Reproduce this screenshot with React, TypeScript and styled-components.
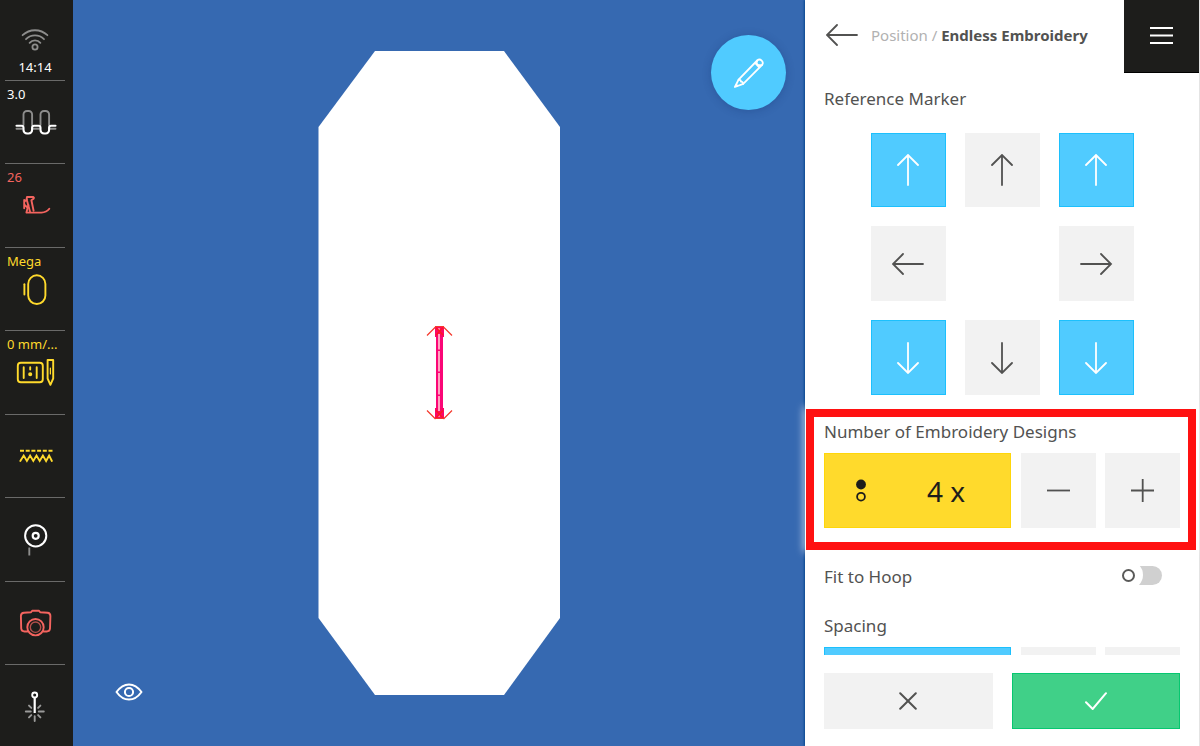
import React, { ReactNode } from "react";
import styled, { createGlobalStyle, css } from "styled-components";

const color = {
  ink: "#1d1d1b",
  canvas: "#3669b1",
  text: "#525251",
  muted: "#b1b1b1",
  tile: "#f2f2f2",
  blue: "#50cbff",
  blueEdge: "#1cc0fd",
  green: "#40d088",
  greenEdge: "#06c770",
  yellow: "#ffda2c",
  yellowEdge: "#ffd60a",
  red: "#ff1111",
  alert: "#f4645f",
};

const GlobalStyle = createGlobalStyle`
  *, *::before, *::after { box-sizing: border-box; }
  body {
    margin: 0;
    font-family: "Noto Sans", "Open Sans", sans-serif;
    color: ${color.text};
    background: #fff;
  }
  button { font: inherit; color: inherit; padding: 0; border: 0; background: none; cursor: pointer; }
  svg { display: block; flex: none; fill: none; stroke: currentColor; }
`;

const Screen = styled.div`
  display: flex;
  height: 100vh;
  overflow: hidden;
`;

/* ---------- machine status bar ---------- */

const StatusBar = styled.nav`
  display: flex;
  flex-direction: column;
  flex: 0 0 73px;
  padding: 0 8px 0 5px;
  background: ${color.ink};
  color: #fff;
  font-size: 13px;
  line-height: 18px;
`;

const Connection = styled.div`
  display: flex;
  flex-direction: column;
  align-items: center;
  justify-content: flex-end;
  flex: 0 0 81px;
  gap: 7px;
  padding-bottom: 4px;
  border-bottom: 1px solid #6a6a69;
`;

const StatusButton = styled.button<{ $tone?: string; $labelled?: boolean }>`
  display: flex;
  flex-direction: column;
  justify-content: ${(p) => (p.$labelled ? "flex-start" : "center")};
  flex: 1 1 0;
  min-height: 0;
  border-bottom: 1px solid #6a6a69;
  color: ${(p) => p.$tone ?? "#fff"};
  text-align: left;

  &:last-child {
    flex: 0 0 81px;
    border-bottom: 0;
  }
`;

const StatusLabel = styled.span`
  padding: 4px 0 0 2px;
  white-space: nowrap;
`;

/* ---------- embroidery canvas ---------- */

const Canvas = styled.main`
  position: relative;
  display: flex;
  align-items: center;
  justify-content: center;
  flex: 1 1 0;
  min-width: 0;
  background: ${color.canvas};
`;

const EditButton = styled.button`
  position: absolute;
  top: 35px;
  right: 19px;
  display: grid;
  place-items: center;
  width: 75px;
  height: 75px;
  border-radius: 50%;
  background: ${color.blue};
  color: #fff;
  box-shadow: 0 1px 8px rgba(20, 50, 110, 0.3);
`;

const ViewButton = styled.button`
  position: absolute;
  left: 42px;
  bottom: 45px;
  color: #fff;
`;

/* ---------- settings panel ---------- */

const Panel = styled.aside`
  position: relative;
  display: flex;
  flex-direction: column;
  flex: 0 0 395px;
  background: #fff;
  border-right: 1px solid #e4e4e4;
  box-shadow: -1px 0 2px #08478f;
`;

const PanelHeader = styled.header`
  display: flex;
  align-items: center;
  flex: 0 0 73px;
  padding-left: 21px;
`;

const BackButton = styled.button`
  margin: 0 12px 3px 0;
`;

const Breadcrumb = styled.h1`
  flex: 1;
  margin: 0;
  padding-bottom: 3px;
  font-size: 15px;
  line-height: 20px;
  font-weight: 700;
  white-space: nowrap;
`;

const BreadcrumbParent = styled.span`
  font-weight: 400;
  color: ${color.muted};
`;

const MenuButton = styled.button`
  display: grid;
  place-items: center;
  align-self: stretch;
  width: 75px;
  background: ${color.ink};
  border-bottom: 1px solid #000;
  color: #fff;
`;

const PanelBody = styled.div`
  flex: 1 1 0;
  min-height: 0;
  overflow-x: visible;
  overflow-y: clip;
  padding: 14px 19px 0;
`;

const Heading = styled.h2`
  margin: 0;
  font-size: 17px;
  line-height: 24px;
  font-weight: 400;
  white-space: nowrap;
`;

const MarkerGrid = styled.div`
  display: grid;
  grid-template-columns: repeat(3, 75px);
  grid-template-rows: 74px 75px 75px;
  gap: 19px;
  padding: 22px 46px 14px 47px;
`;

type Tone = "plain" | "blue" | "green";

const tones = {
  plain: css`
    background: ${color.tile};
    color: ${color.text};
  `,
  blue: css`
    background: ${color.blue};
    border: 1px solid ${color.blueEdge};
    color: #fff;
  `,
  green: css`
    background: ${color.green};
    border: 1px solid ${color.greenEdge};
    color: #fff;
  `,
};

const Tile = styled.button<{ $tone?: Tone }>`
  display: grid;
  place-items: center;
  ${(p) => tones[p.$tone ?? "plain"]}
`;

const Highlight = styled.section`
  margin: 0 -16px 0 -18px;
  padding: 3px 8px 14px 10px;
  border: 8px solid ${color.red};
  background: #fff;
  box-shadow: 0 0 8px 2px rgba(255, 255, 255, 0.75);
`;

const StepperRow = styled.div`
  display: flex;
  gap: 10px;
  height: 75px;
  margin-top: 9px;
`;

const StepButtons = styled.div`
  display: grid;
  grid-template-columns: 75px 75px;
  gap: 9px;
`;

const ValueButton = styled.button`
  display: grid;
  grid-template-columns: 75px 1fr;
  align-items: center;
  justify-items: center;
  flex: 1;
  padding-right: 18px;
  background: ${color.yellow};
  box-shadow: inset 0 0 0 1px ${color.yellowEdge};
  color: ${color.ink};
  font-size: 28px;
  line-height: 40px;
`;

const SpacingValue = styled(Tile)`
  flex: 1;
`;

const SwitchRow = styled.label`
  display: flex;
  align-items: center;
  justify-content: space-between;
  margin: 15px 18px 25px 0;
  font-size: 17px;
  line-height: 24px;
`;

const Switch = styled.input`
  appearance: none;
  position: relative;
  width: 46px;
  height: 19px;
  margin: 0 0 4px;
  border-radius: 10px;
  background: #d0d0d0;
  cursor: pointer;

  &::before {
    content: "";
    position: absolute;
    left: -1px;
    top: -5px;
    width: 28px;
    height: 28px;
    border-radius: 50%;
    background: #fff;
  }

  &::after {
    content: "";
    position: absolute;
    left: 6px;
    top: 3px;
    width: 13px;
    height: 13px;
    border: 2px solid #5a5a59;
    border-radius: 50%;
  }

  &:checked::before,
  &:checked::after {
    transform: translateX(21px);
  }
`;

const PanelFooter = styled.footer`
  display: grid;
  grid-template-columns: 1fr 1fr;
  grid-template-rows: 56px;
  gap: 19px;
  padding: 18px 19px 17px;
`;

/* ---------- icons ---------- */

type Direction = "up" | "right" | "down" | "left";
const turn: Record<Direction, number> = { up: 0, right: 90, down: 180, left: 270 };

const Arrow = ({ to }: { to: Direction }) => (
  <svg width="33" height="32" viewBox="0 0 33 32" strokeWidth="1.8" strokeLinecap="round" aria-hidden="true">
    <path d="M16 1V31M6 11L16 1L26 11" transform={`rotate(${turn[to]} 16 16)`} />
  </svg>
);

const StatusIcon = ({ children }: { children: ReactNode }) => (
  <svg width="60" height="40" viewBox="0 0 60 40" strokeWidth="1.9" strokeLinecap="round" strokeLinejoin="round" aria-hidden="true">
    {children}
  </svg>
);

const WifiIcon = () => (
  <svg width="28" height="24" viewBox="0 0 28 24" strokeWidth="1.8" strokeLinecap="round" aria-hidden="true">
    <g stroke="#8d8d8c">
      <path d="M1.6 8.2C8.6 1.6 19.4 1.6 26.4 8.2M5 12.2C10 7.2 18 7.2 23 12.2M8.6 15.9C11.6 12.6 16.4 12.6 19.4 15.9" />
      <circle cx="14" cy="20" r="2.6" />
    </g>
  </svg>
);

const TensionIcon = () => (
  <StatusIcon>
    <path
      stroke="#8d8d8c"
      d="M18.5 22V11.5a3.5 3.5 0 0 1 3.5 -3.5h1.6a3.5 3.5 0 0 1 3.5 3.5V22M35.5 22V11.5a3.5 3.5 0 0 1 3.5 -3.5h1.6a3.5 3.5 0 0 1 3.5 3.5V22M11.5 25.8H17M28.500 25.8H34M45.500 25.8H50.5"
    />
    <path
      stroke="#fff"
      strokeWidth="2.1"
      d="M11.5 22.8H16.5Q18.5 22.8 18.5 24.8V27a3.5 3.5 0 0 0 3.5 3.5h1.6a3.5 3.5 0 0 0 3.5 -3.5V24.8Q27.1 22.8 29.1 22.8H33.5Q35.5 22.8 35.5 24.8V27a3.5 3.5 0 0 0 3.5 3.5h1.6a3.5 3.5 0 0 0 3.5 -3.5V24.8Q44.1 22.8 46.1 22.8H50.5"
    />
  </StatusIcon>
);

const PresserFootIcon = () => (
  <StatusIcon>
    <path d="M22 11H28.4Q29.2 11.4 28.8 12.4L26.4 14.2L28.6 24.8M22 11L21.600 13.200L25 25.6M19.2 14V22.3M19.2 18.3L22 21.200M19.4 15.600L22 13.4" />
    <path d="M23.400 19L21.400 26.600H36.5Q41.5 26.5 44.3 22.8" />
  </StatusIcon>
);

const HoopIcon = () => (
  <StatusIcon>
    <rect x="23.2" y="5.3" width="17.2" height="28.7" rx="8.6" />
    <path d="M19.4 14.2V24.5" />
  </StatusIcon>
);

const PlateIcon = () => (
  <StatusIcon>
    <rect x="12.8" y="9.8" width="25" height="19.5" rx="3" />
    <path d="M18.7 14.2V25M31.7 14.2V25M25.2 14.2V16.6" />
    <circle cx="25.2" cy="21.3" r="1.1" fill="currentColor" />
    <path d="M42.6 7H48.2V25.5L45.4 31.8L42.6 25.5Z" />
    <path strokeWidth="1.2" d="M45.4 15V21" />
  </StatusIcon>
);

const StitchIcon = () => (
  <StatusIcon>
    <path strokeLinecap="butt" strokeDasharray="4 1.7" d="M15 14.7H47.7" />
    <path
      strokeLinejoin="miter"
      d="M15.3 25L18.7 19.6L21.9 25L25.1 19.6L28.3 25L31.5 19.6L34.7 25L37.9 19.6L41.1 25L44.1 19.6L46.9 25"
    />
  </StatusIcon>
);

const BobbinIcon = () => (
  <StatusIcon>
    <circle cx="30.7" cy="16.8" r="10.6" strokeWidth="2" />
    <circle cx="30.7" cy="16.8" r="3" strokeWidth="2.2" />
    <path stroke="#8d8d8c" strokeLinecap="butt" d="M24.3 28.500V36.500" />
  </StatusIcon>
);

const CameraIcon = () => (
  <StatusIcon>
    <path d="M22.5 28.5H19.5Q16.5 28.5 16.2 25.5L15.9 13Q15.9 10 18.9 9.8L26 9.3L27.2 7.7H34L35.2 9.3L42.5 9.8Q45.4 10 45.4 13L45 25.5Q44.7 28.5 41.8 28.5H38.5" />
    <circle cx="30.5" cy="24.2" r="8.2" />
    <circle cx="30.5" cy="24.2" r="5.2" strokeWidth="1.4" opacity="0.7" />
  </StatusIcon>
);

const PinIcon = () => (
  <StatusIcon>
    <path
      stroke="#9a9a99"
      d="M20.8 26.5H25.8M33.8 26.5H38.8M29.7 31.3V36M24 20.6L26.3 22.9M35.4 20.6L33.1 22.9M24 32.4L26.3 30.1M35.4 32.4L33.1 30.1"
    />
    <circle cx="29.7" cy="10" r="2.5" strokeWidth="1.9" />
    <path strokeWidth="2.2" strokeLinecap="butt" d="M29.7 12.5V28" />
  </StatusIcon>
);

const PencilIcon = () => (
  <svg width="32" height="32" viewBox="0 0 32 32" strokeWidth="1.8" strokeLinecap="round" strokeLinejoin="round" aria-hidden="true">
    <path d="M1.9 30L5.6 22.6L24.2 3.5A3.3 3.3 0 0 1 28.9 8.1L10.2 26.8Z" />
    <path d="M5.6 22.6Q8.1 22.8 7.9 24.6Q9.9 24.6 10.2 26.8M24.2 3.5Q22 8.8 28.9 8.1M3.4 28L4.4 28.8M22.3 6.2L26 10" />
  </svg>
);

const EyeIcon = () => (
  <svg width="28" height="18" viewBox="0 0 28 18" strokeWidth="2" strokeLinejoin="round" aria-hidden="true">
    <path d="M1.5 9Q7 1.4 14 1.4T26.5 9Q21 16.6 14 16.6T1.5 9Z" />
    <circle cx="14" cy="9" r="4.1" />
  </svg>
);

const MenuIcon = () => (
  <svg width="24" height="18" viewBox="0 0 24 18" strokeWidth="2" aria-hidden="true">
    <path d="M0 1H23M0 8.5H23M0 16H23" />
  </svg>
);

const CountIcon = () => (
  <svg width="13" height="25" viewBox="0 0 13 25" aria-hidden="true">
    <circle cx="6" cy="6.5" r="4.9" fill="currentColor" stroke="none" />
    <circle cx="6" cy="18.7" r="3.9" strokeWidth="1.8" />
  </svg>
);

const StepIcon = ({ plus }: { plus?: boolean }) => (
  <svg width="25" height="25" viewBox="0 0 25 25" strokeWidth="1.8" aria-hidden="true">
    <path d={plus ? "M1 12.5H24M12.7 1V24" : "M1 12.5H24"} />
  </svg>
);

const CrossIcon = () => (
  <svg width="18" height="18" viewBox="0 0 18 18" strokeWidth="2" strokeLinecap="round" aria-hidden="true">
    <path d="M1.2 1.2L16.8 16.8M16.8 1.2L1.2 16.8" />
  </svg>
);

const CheckIcon = () => (
  <svg width="22" height="18" viewBox="0 0 22 18" strokeWidth="2" strokeLinecap="round" aria-hidden="true">
    <path d="M1 10.2L7.7 17L21 1.2" />
  </svg>
);

const HoopDrawing = () => (
  <svg width="242" height="644" viewBox="0 0 242 644" role="img" aria-label="Hoop with endless design">
    <polygon points="57,0 186,0 242,76 242,567 186,644 57,644 0.5,567 0.5,76" fill="#fff" stroke="none" />
    <g stroke="none">
      <rect x="118" y="276" width="7" height="91" fill="#fb0677" />
      <rect x="120" y="286" width="2" height="70" fill="#ffa3c0" />
      <path fill="#fb0677" d="M120 298.5h2v1.5h-2zM120 320.5h2v1.5h-2zM120 343.5h2v1.5h-2z" />
      <rect x="117" y="275" width="9" height="11" fill="#fb0668" />
      <rect x="117" y="357" width="9" height="11" fill="#fb0668" />
      <path fill="#ffa3c0" d="M120 283h2v4h-2zM120 356h2v4h-2z" />
      <path fill="#ff7a9c" d="M120 277h2v2h-2zM120 364h2v2h-2z" />
    </g>
    <g stroke="#ff1a1a" strokeWidth="1.2">
      <path d="M118 276.5L125 284M125 276.5L118 284M118 359.5L125 367M125 359.5L118 367" />
      <path
        stroke="#f5382c"
        d="M117.5 276L109 284.5M125.5 276L134 284.5M109 359.5L117.5 368M134 359.5L125.5 368M117 275.5H126M117 367.5H126"
      />
    </g>
  </svg>
);

/* ---------- data ---------- */

const statusItems: { name: string; label?: string; tone?: string; icon: ReactNode }[] = [
  { name: "Thread tension", label: "3.0", icon: <TensionIcon /> },
  { name: "Presser foot", label: "26", tone: color.alert, icon: <PresserFootIcon /> },
  { name: "Hoop", label: "Mega", tone: color.yellow, icon: <HoopIcon /> },
  { name: "Stitch plate and needle", label: "0 mm/...", tone: color.yellow, icon: <PlateIcon /> },
  { name: "Feed dog", tone: color.yellow, icon: <StitchIcon /> },
  { name: "Bobbin", icon: <BobbinIcon /> },
  { name: "Camera", tone: color.alert, icon: <CameraIcon /> },
  { name: "Pinpoint laser", icon: <PinIcon /> },
];

const markers: ({ name: string; to: Direction; on?: boolean } | null)[] = [
  { name: "Top left", to: "up", on: true },
  { name: "Top", to: "up" },
  { name: "Top right", to: "up", on: true },
  { name: "Left", to: "left" },
  null,
  { name: "Right", to: "right" },
  { name: "Bottom left", to: "down", on: true },
  { name: "Bottom", to: "down" },
  { name: "Bottom right", to: "down", on: true },
];

export default function App() {
  return (
    <>
      <GlobalStyle />
      <Screen>
        <StatusBar aria-label="Machine status">
          <Connection>
            <WifiIcon />
            <span>14:14</span>
          </Connection>
          {statusItems.map((item) => (
            <StatusButton key={item.name} aria-label={item.name} $tone={item.tone} $labelled={!!item.label}>
              {item.label && <StatusLabel>{item.label}</StatusLabel>}
              {item.icon}
            </StatusButton>
          ))}
        </StatusBar>

        <Canvas>
          <HoopDrawing />
          <EditButton aria-label="Edit">
            <PencilIcon />
          </EditButton>
          <ViewButton aria-label="Show view options">
            <EyeIcon />
          </ViewButton>
        </Canvas>

        <Panel>
          <PanelHeader>
            <BackButton aria-label="Back">
              <Arrow to="left" />
            </BackButton>
            <Breadcrumb>
              <BreadcrumbParent>Position / </BreadcrumbParent>
              Endless Embroidery
            </Breadcrumb>
            <MenuButton aria-label="Menu">
              <MenuIcon />
            </MenuButton>
          </PanelHeader>

          <PanelBody>
            <Heading>Reference Marker</Heading>
            <MarkerGrid>
              {markers.map((marker, i) =>
                marker ? (
                  <Tile key={i} $tone={marker.on ? "blue" : "plain"} aria-label={marker.name} aria-pressed={!!marker.on}>
                    <Arrow to={marker.to} />
                  </Tile>
                ) : (
                  <span key={i} />
                )
              )}
            </MarkerGrid>

            <Highlight>
              <Heading>Number of Embroidery Designs</Heading>
              <StepperRow>
                <ValueButton>
                  <CountIcon />
                  <span>4 x</span>
                </ValueButton>
                <StepButtons>
                  <Tile aria-label="Fewer designs">
                    <StepIcon />
                  </Tile>
                  <Tile aria-label="More designs">
                    <StepIcon plus />
                  </Tile>
                </StepButtons>
              </StepperRow>
            </Highlight>

            <SwitchRow>
              Fit to Hoop
              <Switch type="checkbox" role="switch" />
            </SwitchRow>

            <Heading>Spacing</Heading>
            <StepperRow>
              <SpacingValue $tone="blue" aria-label="Spacing value" />
              <StepButtons>
                <Tile aria-label="Decrease spacing" />
                <Tile aria-label="Increase spacing" />
              </StepButtons>
            </StepperRow>
          </PanelBody>

          <PanelFooter>
            <Tile aria-label="Cancel">
              <CrossIcon />
            </Tile>
            <Tile $tone="green" aria-label="Confirm">
              <CheckIcon />
            </Tile>
          </PanelFooter>
        </Panel>
      </Screen>
    </>
  );
}
